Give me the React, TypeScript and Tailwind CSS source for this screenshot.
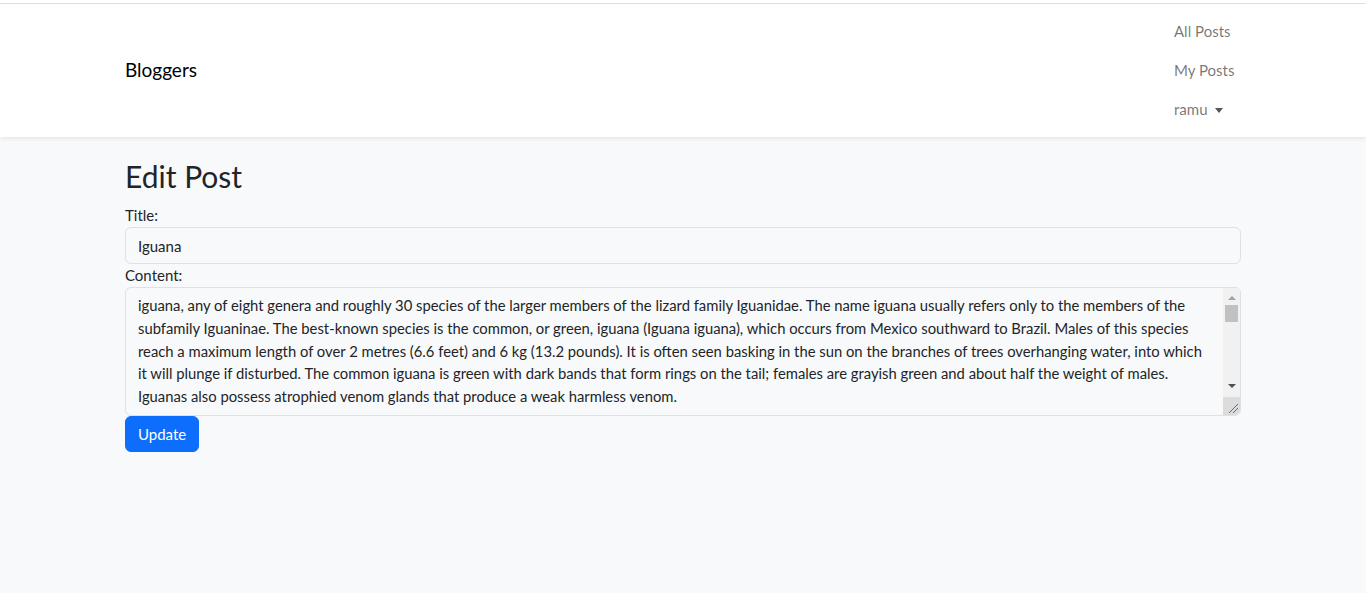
import React from "react";

const content =
  "iguana, any of eight genera and roughly 30 species of the larger members of the lizard family Iguanidae. The name iguana usually refers only to the members of the\nsubfamily Iguaninae. The best-known species is the common, or green, iguana (Iguana iguana), which occurs from Mexico southward to Brazil. Males of this species\nreach a maximum length of over 2 metres (6.6 feet) and 6 kg (13.2 pounds). It is often seen basking in the sun on the branches of trees overhanging water, into which\nit will plunge if disturbed. The common iguana is green with dark bands that form rings on the tail; females are grayish green and about half the weight of males.\nIguanas also possess atrophied venom glands that produce a weak harmless venom.\n\nThe common iguana is a herbivore and feeds on a wide variety of leaves, flowers, and fruits. Young iguanas sometimes eat insects and other small invertebrates, but adults are almost entirely vegetarian. Females dig burrows in which they lay clutches of 20 to 70 eggs; the eggs hatch after roughly three months of incubation. Hatchlings grow quickly and reach sexual maturity in two to three years.\n\nIguanas are hunted for food in many parts of their range, and their eggs are also eaten. In some regions the common iguana has become rare because of overhunting and habitat destruction. Several species of the genus Cyclura, the rock iguanas of the West Indies, are endangered. The desert iguana (Dipsosaurus dorsalis) of the southwestern United States and northwestern Mexico is a smaller species that reaches a length of about 40 cm (16 inches). The marine iguana (Amblyrhynchus cristatus) of the Galapagos Islands is the only lizard that feeds in the sea.";

export default function App() {
  return (
    <div
      className="min-h-[593px] bg-[#f8f9fa] text-[15px] leading-[1.5] text-[#212529]"
      style={{ fontFamily: "Lato, 'Noto Sans', sans-serif" }}
    >
      <div className="h-[4px] bg-white">
        <div className="h-[3px]" />
        <div className="h-[1px] bg-[#dee2e6]" />
      </div>
      <nav className="h-[133px] flex items-center bg-white shadow-[0_2px_4px_rgba(0,0,0,0.075)]">
        <div className="w-[1140px] mx-auto px-3 flex items-center justify-between">
          <a className="text-[19px] leading-[1.5] text-black">Bloggers</a>
          <ul className="flex flex-col whitespace-nowrap w-[75px]">
            <li>
              <a className="block px-2 py-2 leading-[23px] text-[rgba(0,0,0,0.55)]">All Posts</a>
            </li>
            <li>
              <a className="block px-2 py-2 leading-[23px] text-[rgba(0,0,0,0.55)]">My Posts</a>
            </li>
            <li>
              <a className="flex items-center px-2 py-2 leading-[23px] text-[rgba(0,0,0,0.55)]">
                ramu
                <span className="ml-[7px] mt-[1px] inline-block w-0 h-0 border-l-[4.5px] border-r-[4.5px] border-t-[5px] border-l-transparent border-r-transparent border-t-[#555]" />
              </a>
            </li>
          </ul>
        </div>
      </nav>
      <main className="w-[1140px] mx-auto px-3 pt-[21px]">
        <h2 className="text-[30px] leading-[1.2] mb-[10px] font-normal">Edit Post</h2>
        <form onSubmit={(e) => e.preventDefault()}>
          <label className="block leading-[23px]">Title:</label>
          <input
            className="block w-full h-[37px] px-3 border border-[#dee2e6] rounded-[6px] bg-[#f8f9fa] text-[#212529] text-[15px] outline-none"
            defaultValue="Iguana"
          />
          <label className="block leading-[23px]">Content:</label>
          <div className="relative">
            <textarea
              className="block w-full h-[129px] pl-3 pr-[29px] py-[6px] border border-[#dee2e6] rounded-[6px] bg-[#f8f9fa] text-[#212529] text-[14.8px] leading-[22.8px] outline-none resize-none overflow-hidden"
              defaultValue={content}
            />
            <div className="absolute right-[1px] top-[1px] bottom-[1px] w-[17px] flex flex-col bg-[#f1f1f1] rounded-tr-[5px] rounded-br-[5px] overflow-hidden pointer-events-none">
              <div className="h-[17px] flex items-center justify-center">
                <span className="mt-[2px] w-0 h-0 border-l-[4px] border-r-[4px] border-b-[4px] border-l-transparent border-r-transparent border-b-[#a3a3a3]" />
              </div>
              <div className="flex-1 px-[2px]">
                <div className="h-[17px] bg-[#c1c1c1]" />
              </div>
              <div className="h-[17px] flex items-center justify-center">
                <span className="mb-[6px] w-0 h-0 border-l-[4px] border-r-[4px] border-t-[4px] border-l-transparent border-r-transparent border-t-[#505050]" />
              </div>
              <div className="h-[18px] bg-[#dcdcdc] relative">
                <svg className="absolute inset-0" width="17" height="18" viewBox="0 0 17 18">
                  <line x1="15" y1="7" x2="6" y2="16" stroke="#6b6b6b" strokeWidth="1" />
                  <line x1="15" y1="11" x2="10" y2="16" stroke="#6b6b6b" strokeWidth="1" />
                </svg>
              </div>
            </div>
          </div>
          <button
            type="submit"
            className="h-[36px] px-3 rounded-[6px] bg-[#0d6efd] text-white border border-[#0d6efd] text-[15px]"
          >
            Update
          </button>
        </form>
      </main>
    </div>
  );
}
